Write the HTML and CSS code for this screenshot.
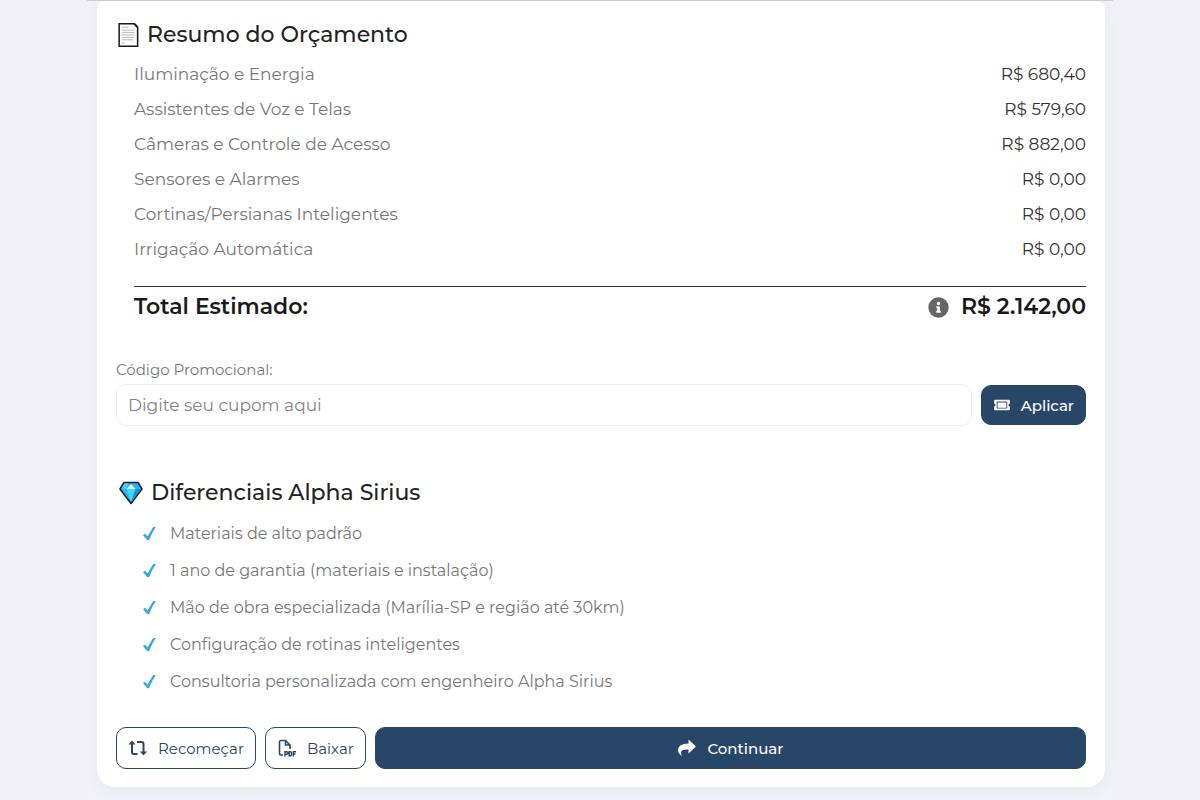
FILE: index.html
```
<!DOCTYPE html>
<html lang="pt-BR">
<head>
<meta charset="utf-8">
<meta name="viewport" content="width=device-width, initial-scale=1">
<title>Resumo do Orçamento</title>
<link rel="stylesheet" href="styles.css">
</head>
<body>
<div class="page">
<main class="card">
  <section class="summary">
    <h2 class="heading">
      <svg class="icon-page" viewBox="0 0 22 26" aria-hidden="true"><path d="M1.2 1.2H17L20.6 5V24.8H1.2Z" fill="#fafafa" stroke="#1a1a1a" stroke-width="1.6"/><path d="M16 1.5L20.5 6V3L18 1Z" fill="#1a1a1a"/><path d="M4 5H11M4 8H17M4 10.5H17M4 13H17M4 15.5H17M4 18H16M4 21.500H7" stroke="#bbb" stroke-width="1"/></svg>
      Resumo do Orçamento
    </h2>
    <dl class="items">
      <div class="item"><dt>Iluminação e Energia</dt><dd>R$ 680,40</dd></div>
      <div class="item"><dt>Assistentes de Voz e Telas</dt><dd>R$ 579,60</dd></div>
      <div class="item"><dt>Câmeras e Controle de Acesso</dt><dd>R$ 882,00</dd></div>
      <div class="item"><dt>Sensores e Alarmes</dt><dd>R$ 0,00</dd></div>
      <div class="item"><dt>Cortinas/Persianas Inteligentes</dt><dd>R$ 0,00</dd></div>
      <div class="item"><dt>Irrigação Automática</dt><dd>R$ 0,00</dd></div>
    </dl>
    <div class="total">
      <span>Total Estimado:</span>
      <span class="total-value">
        <svg class="icon-info" viewBox="0 0 512 512" aria-hidden="true"><path fill="#666" d="M256 8a248 248 0 1 0 0 496 248 248 0 0 0 0-496zm0 110a42 42 0 1 1 0 84 42 42 0 0 1 0-84zm56 254c0 7-5 12-12 12h-88c-7 0-12-5-12-12v-24c0-7 5-12 12-12h12v-64h-12c-7 0-12-5-12-12v-24c0-7 5-12 12-12h64c7 0 12 5 12 12v100h12c7 0 12 5 12 12z"/></svg>
        <span>R$ 2.142,00</span>
      </span>
    </div>
  </section>

  <form class="promo">
    <label class="promo-label" for="cupom">Código Promocional:</label>
    <div class="promo-row">
      <input class="promo-input" id="cupom" type="text" placeholder="Digite seu cupom aqui">
      <button class="button button-apply" type="button">
        <svg class="icon-ticket" viewBox="0 0 576 512" aria-hidden="true"><path fill="currentColor" fill-rule="evenodd" d="M128 160h320v192H128V160zm400 96c0 26 22 48 48 48v96c0 27-21 48-48 48H48c-27 0-48-21-48-48v-96c27 0 48-22 48-48s-21-48-48-48v-96c0-27 21-48 48-48h480c27 0 48 21 48 48v96c-26 0-48 22-48 48zm-48-104c0-13-11-24-24-24H120c-13 0-24 11-24 24v208c0 13 11 24 24 24h336c13 0 24-11 24-24V152z"/></svg>
        Aplicar
      </button>
    </div>
  </form>

  <section class="benefits">
    <h2 class="heading heading-benefits">
      <svg class="icon-gem" viewBox="0 0 24 24" aria-hidden="true"><path d="M5 1.500H19L23 8L12 22.500L1 8Z" fill="#27b5ee" stroke="#16212b" stroke-width="1.600" stroke-linejoin="round"/><path d="M7.500 8H16.500L12 21Z" fill="#43d6ff"/><path d="M16.500 8H22L12 21.500Z" fill="#1593d3"/><path d="M5.500 2.500L2.500 7.500H7.500L9 2.500Z" fill="#54cff5"/><path d="M12 3L7.500 8H16.500Z" fill="#d9faff"/></svg>
      Diferenciais Alpha Sirius
    </h2>
    <ul class="benefit-list">
      <li>Materiais de alto padrão</li>
      <li>1 ano de garantia (materiais e instalação)</li>
      <li>Mão de obra especializada (Marília-SP e região até 30km)</li>
      <li>Configuração de rotinas inteligentes</li>
      <li>Consultoria personalizada com engenheiro Alpha Sirius</li>
    </ul>
  </section>

  <div class="actions">
    <button class="button button-outline" type="button">
      <svg class="icon-action" viewBox="0 0 20 18" aria-hidden="true"><path d="M4 4V13Q4 15 6 15H9.500M9 3H13.500Q15.500 3 15.500 5V14" fill="none" stroke="currentColor" stroke-width="2"/><path d="M0.500 5.500L4 1.500L7.500 5.500ZM12 12.500H19L15.500 16.500Z" fill="currentColor"/></svg>
      Recomeçar
    </button>
    <button class="button button-outline" type="button">
      <svg class="icon-action" viewBox="0 0 20 18" aria-hidden="true"><path d="M6 16H4Q2.500 16 2.500 14.500V3Q2.500 1.500 4 1.500H8.500L13 6V10M8.500 1.500V6H13" fill="none" stroke="currentColor" stroke-width="1.600"/><path d="M8 17.500V12.700H9.500Q11 12.700 11 14T9.500 15.300H8M12.200 12.700V16.800H13Q14.500 16.800 14.500 14.700T13 12.700ZM16.300 17.500V12.700H19M16.300 15H18.500" fill="none" stroke="currentColor" stroke-width="1.400"/></svg>
      Baixar
    </button>
    <button class="button button-continue" type="button">
      <svg class="icon-share" viewBox="0 0 20 18" aria-hidden="true"><path d="M11.500 0.500L19 7.500L11.500 14.500V10.500Q4 10 4 13.500Q4 15 5 17Q1 14.500 1 11Q1 4.500 11.500 4.500Z" fill="currentColor"/></svg>
      Continuar
    </button>
  </div>
</main>
</div>
</body>
</html>
```
FILE: styles.css
```
* { box-sizing: border-box; }
body {
  margin: 0;
  background: #f0f0f5;
  color: #222;
  font-family: Montserrat, Inter, "Liberation Sans", sans-serif;
  font-size: 17px;
}
.page {
  max-width: 1026px;
  min-height: 100vh;
  margin: 0 auto;
  padding: 0 8px 14px 10px;
  border-top: 1px solid #cfcfd2;
  background: #f2f3f8;
}
.card {
  padding: 16px 19px 18px;
  border-radius: 8px 8px 18px 18px;
  background: #fff;
  box-shadow: 0 4px 16px rgba(40, 70, 100, 0.06);
}
.heading {
  display: flex;
  align-items: center;
  gap: 8px;
  margin: 0;
  padding-left: 2px;
  font-size: 22px;
  line-height: 36px;
  font-weight: 500;
  color: #222;
}
.heading-benefits { padding-left: 3px; }
.icon-page { width: 21px; height: 26px; }
.icon-gem { width: 24px; height: 24px; }
.items { margin: 4px 0 0; padding-left: 18px; }
.item {
  display: flex;
  justify-content: space-between;
  gap: 16px;
  line-height: 35px;
}
.item dt { color: #777; }
.item dd { margin: 0; color: #333; }
.total {
  display: flex;
  align-items: center;
  justify-content: space-between;
  margin: 19px 0 0 18px;
  border-top: 1px solid #333;
  color: #1a1a1a;
  font-size: 22px;
  line-height: 40px;
  font-weight: 600;
}
.total-value { display: flex; align-items: center; gap: 12px; }
.icon-info { width: 21px; height: 21px; }
.promo { margin-top: 32px; }
.promo-label {
  display: block;
  color: #777;
  font-size: 15px;
  line-height: 22px;
}
.promo-row {
  display: flex;
  align-items: center;
  gap: 9px;
  margin-top: 3px;
}
.promo-input {
  flex: 1;
  min-width: 0;
  height: 42px;
  padding: 0 11px;
  border: 1px solid #eeeef0;
  border-radius: 10px;
  background: #fff;
  color: #333;
  font: inherit;
}
.promo-input::placeholder { color: #858585; opacity: 1; }
.button {
  display: flex;
  align-items: center;
  justify-content: center;
  gap: 10px;
  height: 42px;
  padding: 0 11px;
  border: 1px solid #284668;
  border-radius: 10px;
  background: #284668;
  color: #fff;
  font: inherit;
  font-size: 15px;
  font-weight: 500;
}
.button-apply { height: 40px; }
.button-outline { background: #fff; color: #284668; font-weight: 400; }
.button-continue { flex: 1; }
.icon-ticket { width: 18px; height: 14px; }
.icon-action { width: 20px; height: 18px; }
.icon-share { width: 20px; height: 18px; }
.benefits { margin-top: 49px; }
.benefit-list {
  margin: 4px 0 0;
  padding: 0 0 0 27px;
  list-style: none;
  color: #777;
  font-size: 16px;
  line-height: 37px;
}
.benefit-list li { display: flex; align-items: center; gap: 14px; }
.benefit-list li::before {
  content: "";
  width: 13px;
  height: 14px;
  background: #36a9e1;
  clip-path: polygon(0 62%, 14% 52%, 36% 70%, 78% 4%, 100% 2%, 70% 48%, 48% 96%, 34% 98%);
}
.actions { display: flex; gap: 9px; margin-top: 27px; }
```
